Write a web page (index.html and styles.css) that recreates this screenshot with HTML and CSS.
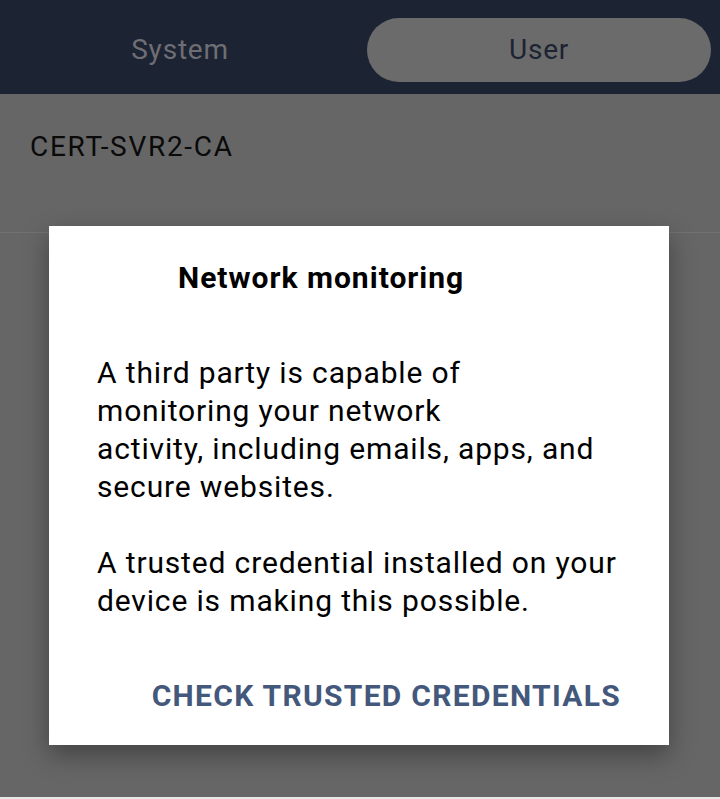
FILE: index.html
```html
<!DOCTYPE html>
<html>
<head>
<meta charset="utf-8">
<link rel="stylesheet" href="styles.css">
</head>
<body>
<div class="screen">
  <header class="tabs">
    <div class="tab">System</div>
    <div class="tab tab-active">User</div>
  </header>
  <div class="row">CERT-SVR2-CA</div>
  <div class="dialog">
    <h1 class="dialog-title">Network monitoring</h1>
    <p class="dialog-text">A third party is capable of<br>monitoring your network<br>activity, including emails, apps, and<br>secure websites.</p>
    <p class="dialog-text">A trusted credential installed on your<br>device is making this possible.</p>
    <div class="dialog-actions">
      <span class="dialog-button">CHECK TRUSTED CREDENTIALS</span>
    </div>
  </div>
</div>
</body>
</html>
```
FILE: styles.css
```css
html, body {
  margin: 0;
  padding: 0;
}
body {
  background: #666666;
  font-family: Roboto, "Noto Sans", sans-serif;
  width: 720px;
  height: 799px;
  overflow: hidden;
}
.screen {
  position: relative;
  height: 797px;
  border-bottom: 2px solid #e8e8e8;
  background: #666666;
}
.tabs {
  height: 94px;
  background: #1c2333;
  display: flex;
  align-items: flex-start;
  padding: 18px 9px 0 0;
  box-sizing: border-box;
}
.tab {
  flex: 0 0 360px;
  text-align: center;
  font-size: 28px;
  letter-spacing: 0.8px;
  color: #6e6e74;
  line-height: 64px;
}
.tab-active {
  flex: 1 1 auto;
  margin-left: 7px;
  background: #6b6b6b;
  border-radius: 32px;
  color: #1c2333;
}
.row {
  height: 139px;
  border-bottom: 1px solid #727272;
  box-sizing: border-box;
  padding: 33px 0 0 30px;
  font-size: 28px;
  letter-spacing: 1.7px;
  color: #0a0a0a;
  line-height: 40px;
}
.dialog {
  position: absolute;
  left: 49px;
  top: 226px;
  width: 620px;
  height: 519px;
  background: #ffffff;
  box-shadow: 0 10px 24px rgba(0, 0, 0, 0.35);
  box-sizing: border-box;
  padding: 32px 0 0 48px;
}
.dialog-title {
  margin: 0 0 0 81px;
  font-size: 30px;
  letter-spacing: 1px;
  font-weight: 700;
  color: #000;
  line-height: 40px;
}
.dialog-text {
  margin: 56px 0 0 0;
  font-size: 30px;
  letter-spacing: 0.85px;
  line-height: 38px;
  color: #000;
}
.dialog-text + .dialog-text {
  margin-top: 38px;
}
.dialog-actions {
  display: flex;
  justify-content: flex-end;
  padding-right: 48px;
  margin-top: 56px;
}
.dialog-button {
  font-size: 30px;
  letter-spacing: 1.3px;
  font-weight: 700;
  color: #44587c;
  line-height: 40px;
}
```
